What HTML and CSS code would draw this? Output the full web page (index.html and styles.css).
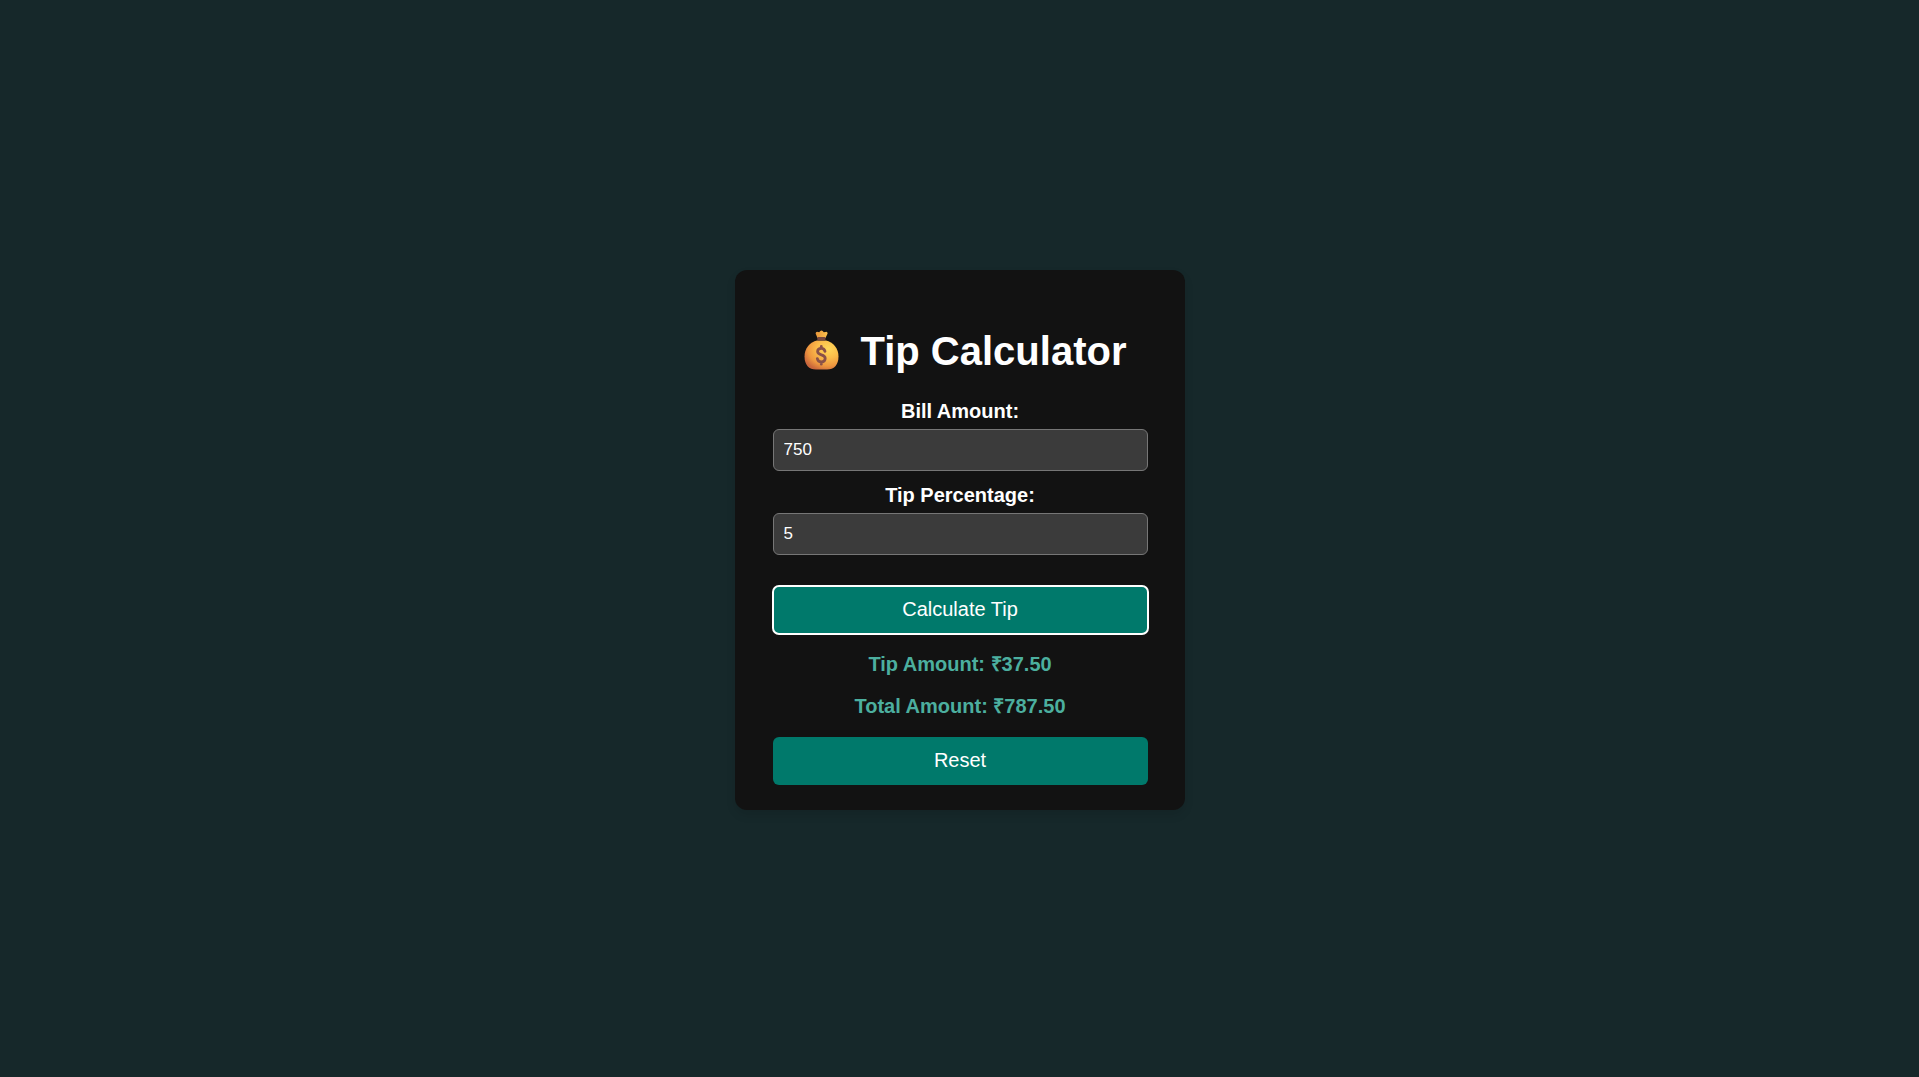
FILE: index.html
```html
<!DOCTYPE html>
<html lang="en">
<head>
<meta charset="utf-8">
<meta name="viewport" content="width=device-width, initial-scale=1">
<title>Tip Calculator</title>
<link rel="stylesheet" href="styles.css">
</head>
<body>
<main class="card">
  <h1 class="title">
    <svg class="bag" viewBox="1 -1 56 46" aria-hidden="true">
      <defs>
        <radialGradient id="body" cx="0.7" cy="0.28" r="0.8">
          <stop offset="0" stop-color="#ffd85a"/>
          <stop offset="0.4" stop-color="#fbbd4a"/>
          <stop offset="0.75" stop-color="#ee963f"/>
          <stop offset="1" stop-color="#c9663c"/>
        </radialGradient>
        <linearGradient id="knot" x1="0" y1="0" x2="1" y2="0">
          <stop offset="0" stop-color="#e8963a"/>
          <stop offset="1" stop-color="#fdc14c"/>
        </linearGradient>
      </defs>
      <path fill="url(#knot)" d="M24.5 9 L22.6 4.4 Q22.8 2.4 25 3 L26.2 3.2 Q28.5 -0.4 30.8 3.2 L32.4 3 Q34.6 2.4 34.6 4.4 L32.5 9 Z"/>
      <path fill="url(#body)" d="M24 11.6 H33 C40 13 45.5 19.5 45.5 27.5 C45.5 36 41 40.5 34 40.5 H23 C16 40.5 11.5 36 11.5 27.5 C11.5 19.5 17 13 24 11.6 Z"/>
      <rect x="24.3" y="8" width="8.2" height="3.6" rx="1" fill="#76483f"/>
      <path fill="none" stroke="#8a5148" stroke-width="2.8" stroke-linecap="round" stroke-linejoin="round" d="M32 22.4 C31.4 20 30 19.4 28.3 19.4 C26 19.4 24.6 20.8 24.6 22.6 C24.6 27 32.2 24.9 32.2 29.3 C32.2 31.6 30.5 33 28.3 33 C26 33 24.7 31.6 24.3 29.6 M28.3 17.4 V19.4 M28.3 33 V35.2"/>
    </svg>
    <span>Tip Calculator</span>
  </h1>
  <form class="form">
    <div class="field">
      <label class="label" for="bill">Bill Amount:</label>
      <input class="input" id="bill" type="text" inputmode="decimal" value="750">
    </div>
    <div class="field">
      <label class="label" for="tip">Tip Percentage:</label>
      <input class="input" id="tip" type="text" inputmode="decimal" value="5">
    </div>
    <button class="button button-active" type="button">Calculate Tip</button>
    <div class="results">
      <output class="result">Tip Amount: ₹37.50</output>
      <output class="result">Total Amount: ₹787.50</output>
    </div>
    <button class="button" type="reset">Reset</button>
  </form>
</main>
</body>
</html>
```

FILE: styles.css
```css
* {
  box-sizing: border-box;
}

body {
  margin: 0;
  min-height: 100vh;
  padding-top: 2px;
  display: flex;
  align-items: center;
  justify-content: center;
  background: #16282a;
  color: #fff;
  font-family: Arial, "Liberation Sans", sans-serif;
}

.card {
  width: 100%;
  max-width: 450px;
  padding: 58px 37px 25px 38px;
  border-radius: 12px;
  background: #121212;
  box-shadow: 0 5px 10px rgba(0, 0, 0, 0.1);
}

.title {
  display: flex;
  align-items: center;
  justify-content: center;
  gap: 11px;
  margin: 0 0 26px;
  font-size: 40px;
  line-height: 46px;
}

.bag {
  width: 56px;
  height: 46px;
}

.form,
.field,
.results {
  display: flex;
  flex-direction: column;
}

.field {
  gap: 6px;
  margin-bottom: 13px;
}

.label {
  font-size: 20px;
  font-weight: bold;
  line-height: 23px;
  text-align: center;
}

.input {
  width: 100%;
  height: 42px;
  padding: 0 10px;
  border: 1px solid #767676;
  border-radius: 6px;
  background: #3b3b3b;
  color: #fff;
  font: 17px Arial, "Liberation Sans", sans-serif;
}

.button {
  height: 48px;
  border: 0;
  border-radius: 6px;
  background: #00796b;
  color: #fff;
  font: 20px Arial, "Liberation Sans", sans-serif;
  cursor: pointer;
}

.button-active {
  margin-top: 18px;
  outline: 2px solid #fff;
  outline-offset: -1px;
}

.results {
  gap: 19px;
  margin: 19px 0;
}

.result {
  color: #4caf9f;
  font-size: 20px;
  font-weight: bold;
  line-height: 23px;
  text-align: center;
}
```
